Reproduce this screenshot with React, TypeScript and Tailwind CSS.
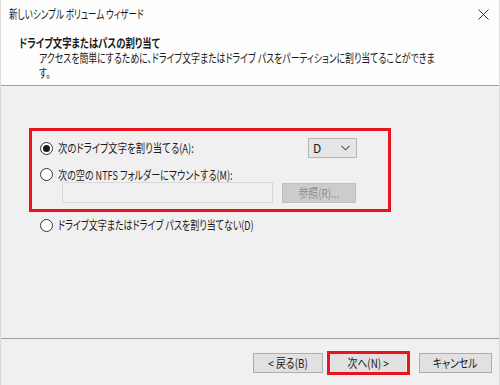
import React from "react";

const font = { fontFamily: '"Meiryo UI","Noto Sans CJK JP","Noto Sans",sans-serif' };

function Radio({ checked }: { checked?: boolean }) {
  return (
    <span className="w-[13px] h-[13px] rounded-full border border-[#333333] bg-white flex items-center justify-center shrink-0">
      {checked && <span className="w-[7px] h-[7px] rounded-full bg-[#1a1a1a]" />}
    </span>
  );
}

export default function App() {
  return (
    <div
      className="w-[500px] h-[385px] flex flex-col bg-[#f0f0f0] text-[12px] leading-[14px] text-[#1a1a1a] border-x border-[#dadada] [font-feature-settings:'palt'] overflow-hidden whitespace-nowrap"
      style={font}
    >
      {/* header */}
      <div className="bg-[#fdfdfd] h-[86px] flex flex-col border-b border-[#a0a0a0]">
        <div className="h-[28px] flex items-center pl-[8px] pr-[10px]">
          <span className="inline-block origin-left scale-x-[0.71]">新しいシンプル ボリューム ウィザード</span>
          <svg className="ml-auto" width="11" height="11" viewBox="0 0 11 11">
            <path d="M0.5 0.5 L10.5 10.5 M10.5 0.5 L0.5 10.5" stroke="#333" strokeWidth="1" />
          </svg>
        </div>
        <div className="pl-[18px] pt-[8px] font-bold">
          <span className="inline-block origin-left scale-x-[0.78]">ドライブ文字またはパスの割り当て</span>
        </div>
        <div className="pl-[38px] pt-[1px] leading-[14.5px] flex flex-col items-start">
          <span className="inline-block origin-left scale-x-[0.74]">
            アクセスを簡単にするために、ドライブ文字またはドライブ パスをパーティションに割り当てることができま
          </span>
          <span className="inline-block origin-left scale-x-[0.74]">す。</span>
        </div>
      </div>

      {/* body */}
      <div className="flex-1 flex flex-col pl-[28px] pt-[42px]">
        <div className="w-[362px] h-[84px] border-[3px] border-[#e8141e] pl-[8px] pr-[31px] pt-[7px] flex flex-col">
          <div className="flex items-center h-[20px]">
            <Radio checked />
            <span className="ml-[5px] inline-block origin-left scale-x-[0.78]">次のドライブ文字を割り当てる(A):</span>
            <div className="ml-auto w-[49px] h-[20px] bg-[#e5e5e5] border border-[#b4b4b4] flex items-center pl-[4px] pr-[6px]">
              <span>D</span>
              <svg className="ml-auto" width="9" height="6" viewBox="0 0 9 6">
                <path d="M0.5 0.8 L4.5 4.8 L8.5 0.8" stroke="#555" strokeWidth="1.1" fill="none" />
              </svg>
            </div>
          </div>
          <div className="flex items-center h-[13px] mt-[10px]">
            <Radio />
            <span className="ml-[5px] inline-block origin-left scale-x-[0.755]">次の空の NTFS フォルダーにマウントする(M):</span>
          </div>
          <div className="flex items-center mt-[1px] pl-[22px] gap-[9px]">
            <div className="w-[211px] h-[21px] bg-[#f0f0f0] border border-[#d9d9d9]" />
            <div className="w-[74px] h-[20px] bg-[#cccccc] border border-[#bfbfbf] flex items-center justify-center text-[#8c8c8c]">
              <span className="inline-block scale-x-[0.82]">参照(R)...</span>
            </div>
          </div>
        </div>
        <div className="flex items-center mt-[6px] pl-[11px]">
          <Radio />
          <span className="ml-[5px] inline-block origin-left scale-x-[0.75]">ドライブ文字またはドライブ パスを割り当てない(D)</span>
        </div>
      </div>

      {/* footer */}
      <div className="h-[47px] border-t border-[#a0a0a0] flex items-start justify-end pt-[14px] pr-[7px]">
        <div className="w-[70px] h-[20px] bg-[#e1e1e1] border border-[#adadad] flex items-center justify-center">
          <span className="inline-block scale-x-[0.82]">&lt; 戻る(B)</span>
        </div>
        <div className="ml-[4px] w-[83px] h-[24px] -mt-[2px] border-[3px] border-[#e8141e] flex items-center justify-center">
          <div className="w-[75px] h-[18px] bg-[#e1e1e1] flex items-center justify-center">
            <span className="inline-block scale-x-[0.82]">次へ(N) &gt;</span>
          </div>
        </div>
        <div className="ml-[9px] w-[73px] h-[20px] bg-[#e1e1e1] border border-[#adadad] flex items-center justify-center">
          <span className="inline-block scale-x-[0.82]">キャンセル</span>
        </div>
      </div>
    </div>
  );
}
